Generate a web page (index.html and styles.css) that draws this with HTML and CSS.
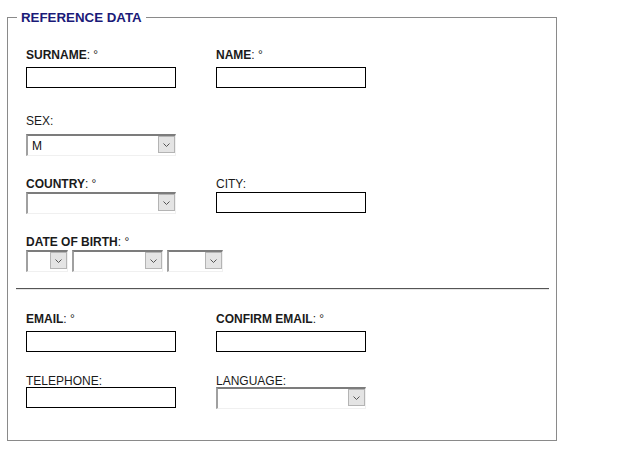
FILE: index.html
```html
<!DOCTYPE html>
<html>
<head>
<meta charset="utf-8">
<title>Reference data</title>
<link rel="stylesheet" href="styles.css">
</head>
<body>
<form class="form">
  <fieldset class="panel">
    <legend class="panel-title">REFERENCE DATA</legend>

    <div class="row row-1">
      <div class="field">
        <label class="lbl"><strong>SURNAME</strong>: °</label>
        <input class="txt" type="text">
      </div>
      <div class="field">
        <label class="lbl"><strong>NAME</strong>: °</label>
        <input class="txt" type="text">
      </div>
    </div>

    <div class="row row-2">
      <div class="field">
        <label class="lbl">SEX:</label>
        <span class="sel w150"><select><option>M</option><option>F</option></select><span class="arrow"><svg width="7" height="4" viewBox="0 0 7 4"><path d="M0.5 0.5 L3.5 3.5 L6.5 0.5" fill="none" stroke="#555" stroke-width="1"/></svg></span></span>
      </div>
    </div>

    <div class="row row-3">
      <div class="field">
        <label class="lbl"><strong>COUNTRY</strong>: °</label>
        <span class="sel w150"><select><option></option></select><span class="arrow"><svg width="7" height="4" viewBox="0 0 7 4"><path d="M0.5 0.5 L3.5 3.5 L6.5 0.5" fill="none" stroke="#555" stroke-width="1"/></svg></span></span>
      </div>
      <div class="field">
        <label class="lbl">CITY:</label>
        <input class="txt" type="text">
      </div>
    </div>

    <div class="row row-4">
      <div class="field">
        <label class="lbl"><strong>DATE OF BIRTH</strong>: °</label>
        <div class="date">
          <span class="sel w42"><select><option></option></select><span class="arrow"><svg width="7" height="4" viewBox="0 0 7 4"><path d="M0.5 0.5 L3.5 3.5 L6.5 0.5" fill="none" stroke="#555" stroke-width="1"/></svg></span></span>
          <span class="sel w91"><select><option></option></select><span class="arrow"><svg width="7" height="4" viewBox="0 0 7 4"><path d="M0.5 0.5 L3.5 3.5 L6.5 0.5" fill="none" stroke="#555" stroke-width="1"/></svg></span></span>
          <span class="sel w56"><select><option></option></select><span class="arrow"><svg width="7" height="4" viewBox="0 0 7 4"><path d="M0.5 0.5 L3.5 3.5 L6.5 0.5" fill="none" stroke="#555" stroke-width="1"/></svg></span></span>
        </div>
      </div>
    </div>

    <hr class="sep">

    <div class="row row-5">
      <div class="field">
        <label class="lbl"><strong>EMAIL</strong>: °</label>
        <input class="txt" type="text">
      </div>
      <div class="field">
        <label class="lbl"><strong>CONFIRM EMAIL</strong>: °</label>
        <input class="txt" type="text">
      </div>
    </div>

    <div class="row row-6">
      <div class="field">
        <label class="lbl">TELEPHONE:</label>
        <input class="txt" type="text">
      </div>
      <div class="field">
        <label class="lbl">LANGUAGE:</label>
        <span class="sel w150"><select><option></option></select><span class="arrow"><svg width="7" height="4" viewBox="0 0 7 4"><path d="M0.5 0.5 L3.5 3.5 L6.5 0.5" fill="none" stroke="#555" stroke-width="1"/></svg></span></span>
      </div>
    </div>
  </fieldset>
</form>
</body>
</html>
```

FILE: styles.css
```css
html, body {
  margin: 0;
  padding: 0;
  background: #fff;
}

body {
  font-family: "Liberation Sans", Arial, sans-serif;
  font-size: 12px;
  color: #1a1a1a;
}

.form {
  margin: 0;
  padding: 10px 0 0 7px;
}

.panel {
  width: 550px;
  box-sizing: border-box;
  margin: 0;
  padding: 23px 7px 31px 8px;
  border: 1px solid #8a8a8a;
  min-inline-size: 0;
}

.panel-title {
  margin-left: 1px;
  padding: 0 4px;
  font-size: 13.3px;
  line-height: 15px;
  font-weight: bold;
  color: #1a1a78;
}

.row {
  display: flex;
  padding-left: 10px;
}

.field {
  width: 190px;
  display: flex;
  flex-direction: column;
  align-items: flex-start;
}

.lbl {
  display: block;
  line-height: 14px;
  margin-bottom: 5px;
  color: #1a1a1a;
  white-space: nowrap;
}

.lbl strong {
  font-weight: bold;
}

.row-2 { margin-top: 26px; }
.row-2 .lbl { margin-bottom: 6px; }
.row-3 { margin-top: 21px; }
.row-3 .lbl { margin-bottom: 1px; }
.row-4 { margin-top: 21px; }
.row-4 .lbl { margin-bottom: 1px; }
.row-5 { margin-top: 22px; }
.row-5 .lbl { margin-bottom: 5px; }
.row-6 { margin-top: 22px; }
.row-6 .lbl { margin-bottom: -1px; }

.txt {
  box-sizing: border-box;
  width: 150px;
  height: 21px;
  margin: 0;
  padding: 0 3px;
  border: 1px solid #000;
  background: #fff;
  font: inherit;
  outline: none;
}

.sel {
  position: relative;
  display: inline-block;
  height: 22px;
}

.sel select {
  -webkit-appearance: none;
  appearance: none;
  box-sizing: border-box;
  width: 100%;
  height: 22px;
  margin: 0;
  padding: 0 0 0 4px;
  border-top: 2px solid #7c7c7c;
  border-left: 2px solid #a0a0a0;
  border-right: 1px solid #f0f0f0;
  border-bottom: 1px solid #f0f0f0;
  border-radius: 0;
  background: #fff;
  font: inherit;
  color: #111;
  outline: none;
}

.arrow {
  position: absolute;
  top: 2px;
  right: 1px;
  width: 17px;
  height: 17px;
  box-sizing: border-box;
  border: 1px solid #b4b4b4;
  background: #e4e4e4;
  display: flex;
  align-items: center;
  justify-content: center;
  pointer-events: none;
}

.arrow svg {
  display: block;
}

.w150 { width: 150px; }
.w42 { width: 42px; }
.w91 { width: 91px; }
.w56 { width: 56px; }

.date {
  display: flex;
  gap: 4px;
}

.sep {
  height: 0;
  margin: 16px 0 0 0;
  border: 0;
  border-top: 1px solid #555;
  border-bottom: 1px solid #e6e6e6;
}
```
